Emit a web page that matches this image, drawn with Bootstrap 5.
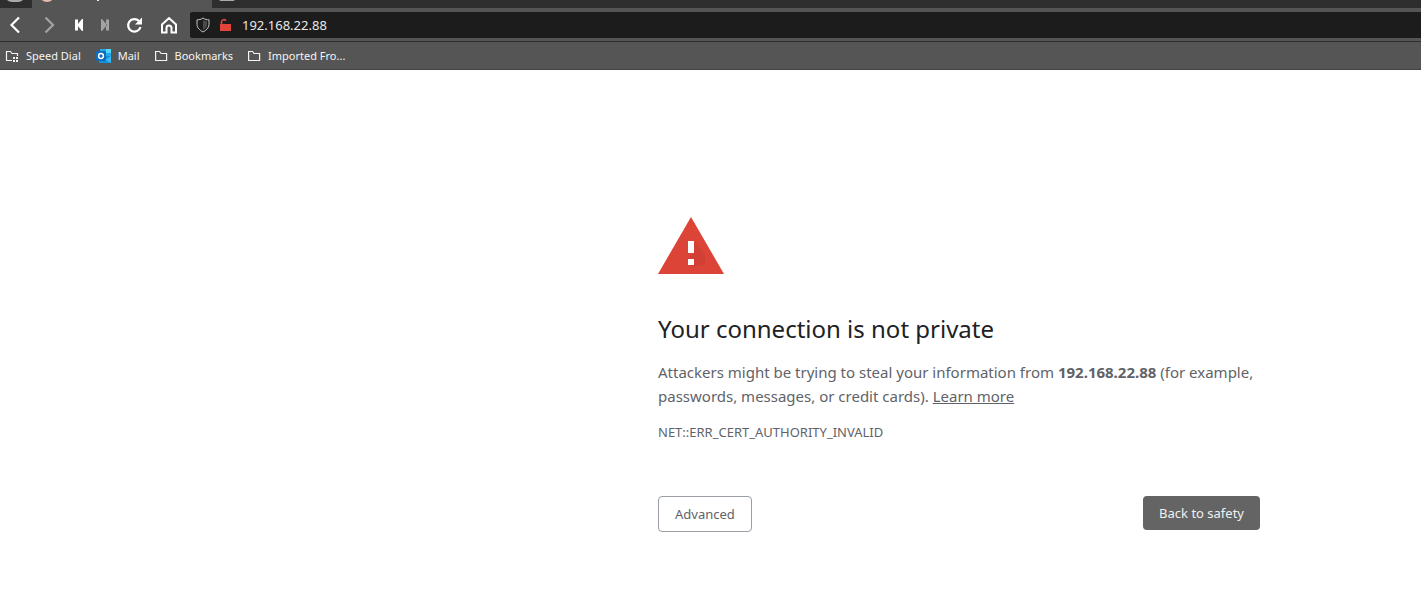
<!DOCTYPE html>
<html lang="en">
<head>
<meta charset="utf-8">
<meta name="viewport" content="width=device-width, initial-scale=1">
<title>Privacy error</title>
<link href="https://cdn.jsdelivr.net/npm/bootstrap@5.3.0/dist/css/bootstrap.min.css" rel="stylesheet">
<style>
body { font-family: "Noto Sans", sans-serif; background: #fff; overflow-x: hidden; }
svg { display: block; flex: none; }
.tab-strip { height: 8px; background: #2e2e2e; overflow: hidden; }
.tab-pinned { width: 32px; padding-left: 7px; }
.tab-active { width: 180px; background: #555; padding-left: 7px; }
.tab-next { padding-left: 7px; }
.toolbar { height: 34px; background: #555; border-bottom: 1px solid #2e2e2e; }
.nav-tools { width: 190px; padding-left: 6px; }
.tool-btn { padding: 0; border: 0; background: none; color: #fff; }
.tool-btn:disabled { color: #a3a3a3; border: 0; }
.address { height: 26px; background: #1c1c1c; border-radius: 2px 0 0 2px; padding-left: 6px; }
.address input { background: none; border: 0; outline: 0; color: #e8e8e8; font-size: 13px; line-height: 18px; padding: 0; margin-left: 10px; }
.bookmarks { height: 28px; background: #555; border-bottom: 1px solid #444; padding-left: 5px; gap: 15px; }
.bookmarks a { color: #f4f4f4; font-size: 11px; line-height: 16px; white-space: nowrap; gap: 6px; }
.notice { width: 602px; max-width: 100%; margin-left: auto; margin-right: 161px; padding-top: 147px; color: #5f6368; font-size: 15px; line-height: 24px; }
.notice h1 { color: #202124; font-size: 24px; line-height: 30px; font-weight: 400; margin: 40px 0 16px; }
.notice p { margin: 0 0 12px; }
.notice p a { color: #5f6368; }
.notice .error-code { font-size: 13px; margin-bottom: 52px; }
.actions .btn { font-size: 13px; line-height: 18px; padding: 8px 16px; border-radius: 4px; }
.actions .btn-details { color: #5f6368; border: 1px solid #9aa0a6; }
.actions .btn-safe { color: #f1f1f1; background: #646464; border: 0; }
</style>
</head>
<body>
<header>
  <div class="tab-strip d-flex">
    <div class="tab-pinned"><svg width="16" height="8"><path d="M0 0h16q-2 2-5 2H5Q2 2 0 0z" fill="#aaa"/></svg></div>
    <div class="tab-active d-flex"><svg width="16" height="8"><circle cx="8" cy="-6" r="8" fill="#e8b9b0"/></svg><svg width="80" height="8"><path d="M42 0h2v1h-2z" fill="#eee"/></svg></div>
    <div class="tab-next"><svg width="16" height="8"><rect y="-8" width="16" height="9" rx="2" fill="#aaa"/></svg></div>
  </div>
  <div class="toolbar d-flex align-items-center">
    <div class="nav-tools d-flex align-items-center">
      <button class="tool-btn" aria-label="Back"><svg width="34" height="18" fill="none" stroke="currentColor" stroke-width="2.2"><path d="M13 1.500 5.500 9l7.500 7.500"/></svg></button>
      <button class="tool-btn" aria-label="Forward" disabled><svg width="32" height="18" fill="none" stroke="currentColor" stroke-width="2.2"><path d="M5.500 1.500 13 9 5.500 16.500"/></svg></button>
      <button class="tool-btn" aria-label="Rewind"><svg width="28" height="18" fill="currentColor"><path d="M3 3.500h3v11H3zM11 3v12h-1L5 9l5-6z"/></svg></button>
      <button class="tool-btn" aria-label="Fast forward" disabled><svg width="26" height="18" fill="currentColor"><path d="M6 3.500h3v11H6zM1 3v12h1l5-6-5-6z"/></svg></button>
      <button class="tool-btn" aria-label="Reload"><svg width="34" height="18" fill="none" stroke="currentColor" stroke-width="2.2"><path d="M13 5A6.300 6.300 0 1 0 14.500 11"/><path d="M16 1.500v7H9z" fill="currentColor" stroke="none"/></svg></button>
      <button class="tool-btn" aria-label="Home"><svg width="18" height="18" fill="none" stroke="currentColor" stroke-width="2"><path d="M2 8.500 9 2l7 6.500v8h-4.500V12a2.500 2.500 0 0 0-5 0v4.500H2z"/></svg></button>
    </div>
    <div class="address d-flex flex-grow-1 align-items-center">
      <svg width="14" height="16"><path d="M7 1c2 1.500 4 1.800 6 1.800v4.500c0 3.800-3 6-6 7.700-3-1.700-6-3.900-6-7.700V2.800C3 2.800 5 2.500 7 1z" fill="#1c1c1c" stroke="#c4c4bc"/><path d="M7 3v10c2.500-1.500 4-3 4-5.500V4.200C9.500 4.200 8 3.800 7 3z" fill="#4a4a4a"/></svg>
      <svg class="ms-2" width="14" height="16" fill="#e0443a"><path d="M2 7h11v7H2z"/><path d="M3.500 8V5a2.500 2.500 0 0 1 4.500-1.300" fill="none" stroke="#e0443a" stroke-width="1.600"/></svg>
      <input class="flex-grow-1" type="text" aria-label="Address" value="192.168.22.88">
    </div>
  </div>
  <nav class="bookmarks d-flex align-items-center" aria-label="Bookmarks">
    <a class="d-flex align-items-center text-decoration-none" href="#"><svg width="15" height="14" fill="none" stroke="currentColor" stroke-width="1.200"><path d="M7 11.500H1.500v-9h4l1.500 2h5.500V7"/><path d="M8 8h2v2H8zM11 8h2v2h-2zM8 11h2v2H8zM11 11h2v2h-2z" fill="currentColor" stroke="none"/></svg>Speed Dial</a>
    <a class="d-flex align-items-center text-decoration-none" href="#"><svg width="16" height="16"><path d="M4 1h11v7H4z" fill="#28a8ea"/><path d="M10 1h5v4h-5z" fill="#50d9ff"/><path d="M3 8h12v7H3z" fill="#1490df"/><path d="m15 8-6 4 6 3z" fill="#35b8f1"/><rect y="3" width="10" height="10" rx="1" fill="#0f6cbd"/><circle cx="5" cy="8" r="2.400" fill="none" stroke="#fff" stroke-width="1.500"/></svg>Mail</a>
    <a class="d-flex align-items-center text-decoration-none" href="#"><svg width="14" height="14" fill="none" stroke="currentColor" stroke-width="1.200"><path d="M.6 2.500h4l1.500 2h5.500v7h-11z"/></svg>Bookmarks</a>
    <a class="d-flex align-items-center text-decoration-none" href="#"><svg width="14" height="14" fill="none" stroke="currentColor" stroke-width="1.200"><path d="M.6 2.500h4l1.500 2h5.500v7h-11z"/></svg>Imported Fro...</a>
  </nav>
</header>
<main class="notice">
  <svg width="66" height="57"><path d="M33 0 66 57H0z" fill="#db4437"/><path d="m36 24 11 13v11l-11 2-6-2v-6l6-6z" fill="#c53d32" opacity=".4"/><path d="M30 24h6v12h-6zM30 42h6v6h-6z" fill="#fff"/></svg>
  <h1>Your connection is not private</h1>
  <p>Attackers might be trying to steal your information from <strong>192.168.22.88</strong> (for example, passwords, messages, or credit cards). <a href="#">Learn more</a></p>
  <p class="error-code">NET::ERR_CERT_AUTHORITY_INVALID</p>
  <div class="actions d-flex justify-content-between align-items-start">
    <button class="btn btn-details">Advanced</button>
    <button class="btn btn-safe">Back to safety</button>
  </div>
</main>
<script src="https://cdn.jsdelivr.net/npm/bootstrap@5.3.0/dist/js/bootstrap.bundle.min.js"></script>
</body>
</html>
